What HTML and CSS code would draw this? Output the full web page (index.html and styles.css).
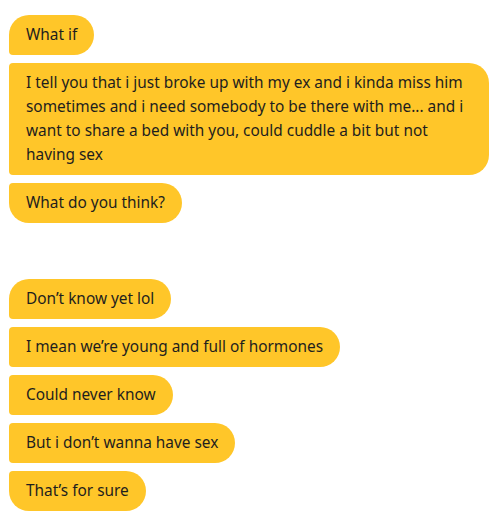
FILE: index.html
```html
<!DOCTYPE html>
<html lang="en">

<head>
    <meta charset="UTF-8">
    <title>Chat</title>
    <link rel="stylesheet" href="styles.css">
</head>

<body>
    <div class="thread">
        <div class="group">
            <div class="bubble">What if</div>
            <div class="bubble">I tell you that i just broke up with my ex and i kinda miss him sometimes and i need somebody to be there with me... and i want to share a bed with you, could cuddle a bit but not having sex</div>
            <div class="bubble">What do you think?</div>
        </div>
        <div class="group">
            <div class="bubble">Don’t know yet lol</div>
            <div class="bubble">I mean we’re young and full of hormones</div>
            <div class="bubble">Could never know</div>
            <div class="bubble">But i don’t wanna have sex</div>
            <div class="bubble">That’s for sure</div>
        </div>
    </div>
</body>

</html>
```

FILE: styles.css
```css
body {
    margin: 0;
    padding: 15px 10px 0 9px;
    font-family: "Noto Sans", "Open Sans", sans-serif;
    font-size: 15.4px;
    color: #1e1e1e;
    background: #ffffff;
}

.thread {
    display: flex;
    flex-direction: column;
    gap: 56px;
}

.group {
    display: flex;
    flex-direction: column;
    align-items: flex-start;
    gap: 8px;
}

.bubble {
    background-color: #ffc629;
    padding: 8px 17px;
    line-height: 24px;
    border-radius: 4px 20px 20px 4px;
    max-width: 446px;
}

.bubble:first-child {
    border-top-left-radius: 20px;
}

.bubble:last-child {
    border-bottom-left-radius: 20px;
}
```
